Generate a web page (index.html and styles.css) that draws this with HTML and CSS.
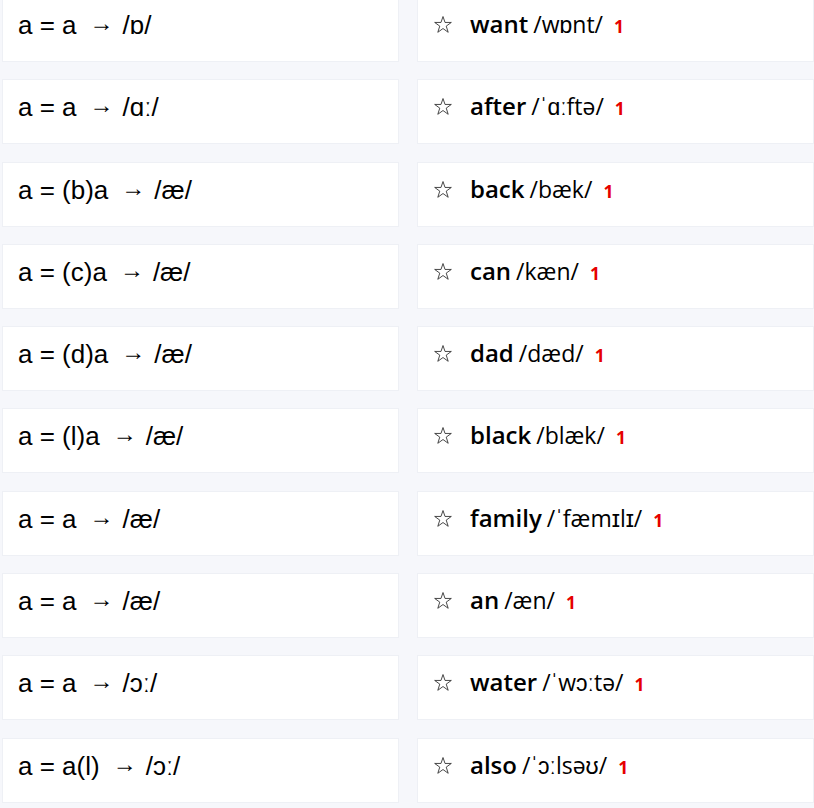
FILE: index.html
```html
<!DOCTYPE html>
<html>
<head>
<meta charset="utf-8">
<link rel="stylesheet" href="styles.css">
</head>
<body>
<div class="list">
  <div class="card rule">a = a<span class="arrow">→</span>/ɒ/</div>
  <div class="card word"><svg class="star" viewBox="0 0 20 19"><polygon points="10,0.6 12.25,7.2 19.3,7.2 13.6,11.3 15.8,18.2 10,14 4.2,18.2 6.4,11.3 0.7,7.2 7.75,7.2"/></svg><span class="w">want</span><span class="ipa">/wɒnt/</span><span class="count">1</span></div>

  <div class="card rule">a = a<span class="arrow">→</span>/ɑː/</div>
  <div class="card word"><svg class="star" viewBox="0 0 20 19"><polygon points="10,0.6 12.25,7.2 19.3,7.2 13.6,11.3 15.8,18.2 10,14 4.2,18.2 6.4,11.3 0.7,7.2 7.75,7.2"/></svg><span class="w">after</span><span class="ipa">/ˈɑːftə/</span><span class="count">1</span></div>

  <div class="card rule">a = (b)a<span class="arrow">→</span>/æ/</div>
  <div class="card word"><svg class="star" viewBox="0 0 20 19"><polygon points="10,0.6 12.25,7.2 19.3,7.2 13.6,11.3 15.8,18.2 10,14 4.2,18.2 6.4,11.3 0.7,7.2 7.75,7.2"/></svg><span class="w">back</span><span class="ipa">/bæk/</span><span class="count">1</span></div>

  <div class="card rule">a = (c)a<span class="arrow">→</span>/æ/</div>
  <div class="card word"><svg class="star" viewBox="0 0 20 19"><polygon points="10,0.6 12.25,7.2 19.3,7.2 13.6,11.3 15.8,18.2 10,14 4.2,18.2 6.4,11.3 0.7,7.2 7.75,7.2"/></svg><span class="w">can</span><span class="ipa">/kæn/</span><span class="count">1</span></div>

  <div class="card rule">a = (d)a<span class="arrow">→</span>/æ/</div>
  <div class="card word"><svg class="star" viewBox="0 0 20 19"><polygon points="10,0.6 12.25,7.2 19.3,7.2 13.6,11.3 15.8,18.2 10,14 4.2,18.2 6.4,11.3 0.7,7.2 7.75,7.2"/></svg><span class="w">dad</span><span class="ipa">/dæd/</span><span class="count">1</span></div>

  <div class="card rule">a = (l)a<span class="arrow">→</span>/æ/</div>
  <div class="card word"><svg class="star" viewBox="0 0 20 19"><polygon points="10,0.6 12.25,7.2 19.3,7.2 13.6,11.3 15.8,18.2 10,14 4.2,18.2 6.4,11.3 0.7,7.2 7.75,7.2"/></svg><span class="w">black</span><span class="ipa">/blæk/</span><span class="count">1</span></div>

  <div class="card rule">a = a<span class="arrow">→</span>/æ/</div>
  <div class="card word"><svg class="star" viewBox="0 0 20 19"><polygon points="10,0.6 12.25,7.2 19.3,7.2 13.6,11.3 15.8,18.2 10,14 4.2,18.2 6.4,11.3 0.7,7.2 7.75,7.2"/></svg><span class="w">family</span><span class="ipa">/ˈfæmɪlɪ/</span><span class="count">1</span></div>

  <div class="card rule">a = a<span class="arrow">→</span>/æ/</div>
  <div class="card word"><svg class="star" viewBox="0 0 20 19"><polygon points="10,0.6 12.25,7.2 19.3,7.2 13.6,11.3 15.8,18.2 10,14 4.2,18.2 6.4,11.3 0.7,7.2 7.75,7.2"/></svg><span class="w">an</span><span class="ipa">/æn/</span><span class="count">1</span></div>

  <div class="card rule">a = a<span class="arrow">→</span>/ɔː/</div>
  <div class="card word"><svg class="star" viewBox="0 0 20 19"><polygon points="10,0.6 12.25,7.2 19.3,7.2 13.6,11.3 15.8,18.2 10,14 4.2,18.2 6.4,11.3 0.7,7.2 7.75,7.2"/></svg><span class="w">water</span><span class="ipa">/ˈwɔːtə/</span><span class="count">1</span></div>

  <div class="card rule">a = a(l)<span class="arrow">→</span>/ɔː/</div>
  <div class="card word"><svg class="star" viewBox="0 0 20 19"><polygon points="10,0.6 12.25,7.2 19.3,7.2 13.6,11.3 15.8,18.2 10,14 4.2,18.2 6.4,11.3 0.7,7.2 7.75,7.2"/></svg><span class="w">also</span><span class="ipa">/ˈɔːlsəʊ/</span><span class="count">1</span></div>
</div>
</body>
</html>
```

FILE: styles.css
```css
html, body {
  margin: 0;
  padding: 0;
  background: #f6f7fb;
  overflow: hidden;
}

.list {
  display: grid;
  grid-template-columns: 397px 397px;
  column-gap: 18px;
  row-gap: 17.3px;
  margin-top: -3px;
  padding-left: 2px;
}

.card {
  box-sizing: border-box;
  height: 65px;
  background: #ffffff;
  border: 1px solid #eef0f5;
  padding: 0 15px;
  white-space: nowrap;
  color: #000;
}

.rule {
  display: block;
  font-family: "Liberation Sans", Arial, sans-serif;
  font-size: 26px;
  padding-top: 12px;
  line-height: 30px;
}

.rule .arrow {
  display: inline-block;
  font-size: 24px;
  line-height: 20px;
  vertical-align: 3px;
  margin: 0 9px 0 13px;
}

.word {
  display: flex;
  align-items: baseline;
  font-family: "Open Sans", sans-serif;
  padding-top: 10px;
  line-height: 32px;
}

.star {
  width: 20px;
  height: 17px;
  margin-right: 17px;
  fill: none;
  stroke: #333;
  stroke-width: 1;
  stroke-linejoin: miter;
}

.w {
  font-size: 24px;
  font-weight: 600;
  margin-right: 5px;
}

.ipa {
  font-size: 23px;
}

.count {
  color: #e60000;
  font-weight: 700;
  font-size: 17.5px;
  margin-left: 11px;
}
```
